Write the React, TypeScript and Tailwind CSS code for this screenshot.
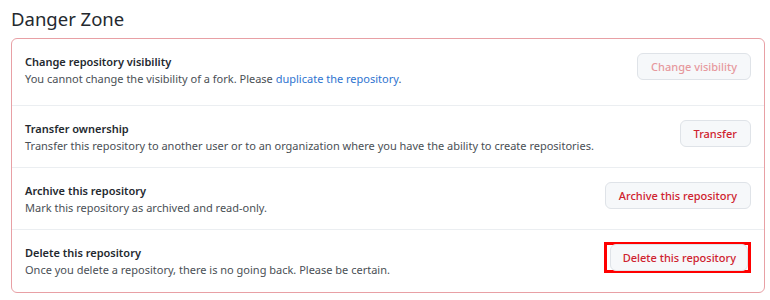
import React from 'react';

interface DangerRow {
  title: string;
  description: React.ReactNode;
  action: string;
  disabled?: boolean;
  highlighted?: boolean;
}

const rows: DangerRow[] = [
  {
    title: 'Change repository visibility',
    description: (
      <>
        You cannot change the visibility of a fork. Please{' '}
        <a href="#" className="text-[#2f74d0]">duplicate the repository</a>.
      </>
    ),
    action: 'Change visibility',
    disabled: true,
  },
  {
    title: 'Transfer ownership',
    description:
      'Transfer this repository to another user or to an organization where you have the ability to create repositories.',
    action: 'Transfer',
  },
  {
    title: 'Archive this repository',
    description: 'Mark this repository as archived and read-only.',
    action: 'Archive this repository',
  },
  {
    title: 'Delete this repository',
    description: 'Once you delete a repository, there is no going back. Please be certain.',
    action: 'Delete this repository',
    highlighted: true,
  },
];

const ActionButton: React.FC<{ row: DangerRow }> = ({ row }) => {
  const button = (
    <button
      disabled={row.disabled}
      className={`h-[27px] rounded-md border border-[#dfe3e8] bg-[#f6f8fa] text-[11px] font-medium leading-none ${
        row.highlighted ? 'pl-[12px] pr-[11px] h-[25px]' : 'px-[13px]'
      } ${row.disabled ? 'text-[#e6989d]' : 'text-[#cf222e]'}`}
    >
      {row.action}
    </button>
  );

  if (!row.highlighted) return <div className="mb-[7px]">{button}</div>;

  // red outline drawn around the delete button
  return (
    <div className="flex items-center border-[3px] border-[#ff0000] pl-[3px] h-[31px] mb-[7px]">
      {button}
    </div>
  );
};

export default function App() {
  return (
    <div className="w-[770px] h-[300px] bg-white pl-[11px] pr-[5px] pt-[5px] font-['Noto_Sans',sans-serif] text-[#24292f]">
      <h2 className="text-[18.5px] leading-[28px] font-normal">Danger Zone</h2>

      {/* Danger box */}
      <div className="mt-[5px] border border-[#e8a0a5] rounded-md">
        {rows.map((row, i) => (
          <div
            key={row.title}
            className={`flex items-center justify-between pl-[13px] pr-[13px] ${
              i === 0 ? 'h-[66px] pb-[5px]' : i === 3 ? 'h-[63px]' : 'h-[62px]'
            } ${i > 0 ? 'border-t border-[#ebeef1]' : ''}`}
          >
            <div>
              <div className="text-[11px] leading-[17px] font-semibold">{row.title}</div>
              <div className="text-[11px] leading-[17px] text-[#4a4f55]">{row.description}</div>
            </div>
            <ActionButton row={row} />
          </div>
        ))}
      </div>
    </div>
  );
}
